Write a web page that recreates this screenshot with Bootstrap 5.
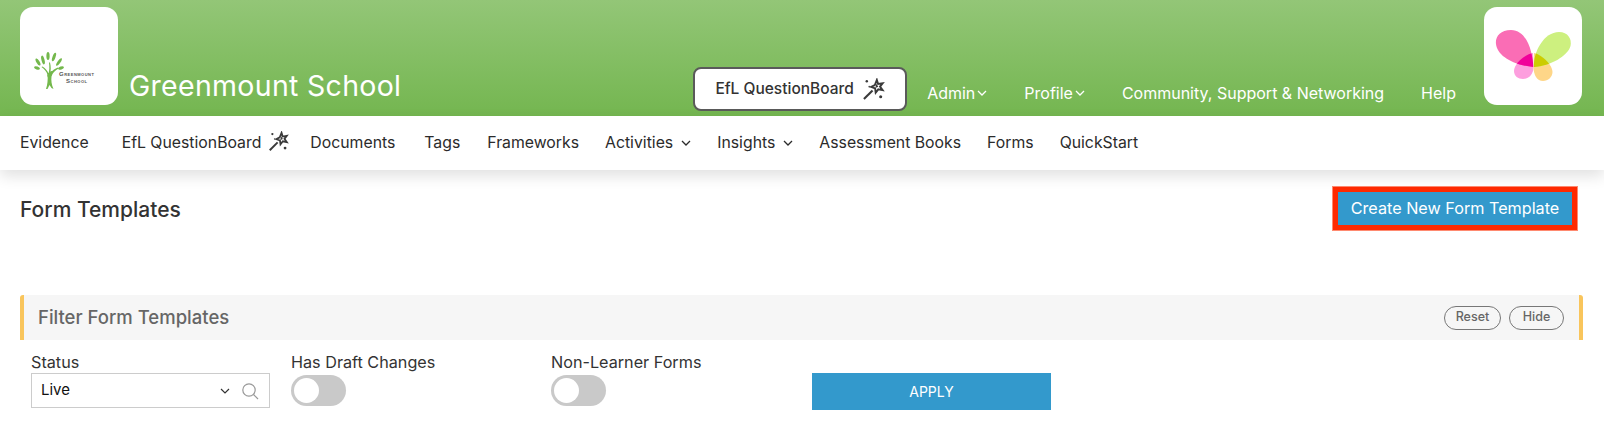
<!DOCTYPE html>
<html lang="en">
<head>
    <meta charset="UTF-8">
    <meta name="viewport" content="width=device-width, initial-scale=1.0">
    <title>Form Templates</title>
    <link href="https://cdn.jsdelivr.net/npm/bootstrap@5.3.0/dist/css/bootstrap.min.css" rel="stylesheet">
    <style>
        body { font-family: Inter, "Liberation Sans", sans-serif; color: #2b2b2b; background: #fff; }
        .top-band { height: 116px; background: linear-gradient(#93c677, #74b650); padding: 7px 22px 0 20px; }
        .logo-tile { width: 98px; height: 98px; background: #fff; border-radius: 13px; flex: none; }
        .school-tile { padding: 0 0 16px 14px; }
        .school-name { font-size: 28.5px; line-height: 1; color: #fff; margin: 0 0 16px 11px; letter-spacing: .3px; }
        .qb-pill { width: 214px; height: 44px; margin: 0 0 5px; background: #fff; border: 2px solid #5a5a5a; border-radius: 8px; font-size: 15.5px; font-weight: 500; color: #333; }
        .top-link { color: #fff; font-size: 16px; line-height: 20px; text-decoration: none; margin: 0 0 13px 37px; }
        .top-link.first-link { margin-left: 20px; }
        .top-link.last-link { margin-right: 28px; }
        .caret-gap { gap: 2px; }
        .main-nav { height: 54px; padding-left: 20px; box-shadow: 0 6px 14px rgba(0,0,0,.12); position: relative; }
        .main-link { color: #2b2b2b; font-size: 15.8px; text-decoration: none; margin-right: 26px; }
        .main-link.wide-after { margin-right: 33px; }
        .main-link.wand-link { margin-right: 21px; }
        .main-link.docs-link { margin-right: 29px; }
        .main-link.tags-link { margin-right: 27px; }
        .wand-small { margin: 0 0 4px 7px; }
        .title-row { padding: 16px 26px 0 20px; }
        .page-name { font-size: 21px; font-weight: 500; color: #333; margin: 3px 0 0; }
        .create-btn { background: #3399cc; color: #fff; font-size: 16.2px; border: 6px solid #ff2a00; border-radius: 0; padding: 0; width: 246px; height: 45px; outline: 1px solid #ff8a70; outline-offset: -1px; }
        .filter-bar { margin: 64px 21px 0 20px; height: 45px; background: #f6f6f6; border-left: 4px solid #f9c55c; border-right: 4px solid #f9c55c; border-radius: 3px 3px 0 0; padding: 0 15px 0 14px; }
        .filter-name { font-size: 18.5px; font-weight: 500; color: #666; margin: 0; }
        .pill-btn { width: 57px; font-size: 12.5px; font-weight: 500; color: #666; border: 1px solid #777; border-radius: 12px; background: transparent; height: 24px; padding: 0; }
        .pill-btn.pill-hide { width: 55px; }
        .filter-fields { padding: 12px 0 0 31px; }
        .field-col { width: 260px; }
        .field-label { font-size: 16.2px; color: #333; line-height: 20px; margin: 0; }
        .status-box { width: 239px; height: 35px; border: 1px solid #ccc; padding: 0 10px 0 9px; margin-top: 1px; font-size: 15px; color: #111; }
        .select-caret { margin-right: 11px; }
        .toggle-track { width: 55px; height: 31px; background: #c9c9c9; border-radius: 16px; margin-top: 3px; padding: 3px; }
        .toggle-knob { width: 25px; height: 25px; background: #fff; border-radius: 50%; }
        .apply-btn { background: #3399cc; color: #fff; font-size: 14px; width: 239px; height: 37px; border: 0; border-radius: 0; padding: 0; margin: 21px 0 0 1px; }
        .mini-school { font-family: "Liberation Sans", sans-serif; font-size: 6px; font-weight: 700; line-height: 7px; color: #555; font-variant: small-caps; text-align: center; letter-spacing: .5px; margin: 0 0 4px -5px; }
    </style>
</head>
<body>
    <svg width="0" height="0" class="d-block">
        <symbol id="wand" viewBox="0 0 24 24">
            <path d="M2 22L11 13" stroke="#3a3a3a" stroke-width="2.2" fill="none"/>
            <path d="M15.5 2l1.3 4.300 4.700-.8-2.700 3.500 2.700 3.700-4.500-.9-2.700 3.400-.6-4.300-4.200-1.600 3.900-2z" fill="none" stroke="#3a3a3a" stroke-width="2"/>
            <path d="M15 6l2 3-3 1.500z" fill="#3a3a3a"/>
            <circle cx="5" cy="3.5" r="1.3" fill="#3a3a3a"/>
            <circle cx="7.5" cy="9" r=".8" fill="#3a3a3a"/>
            <circle cx="19.5" cy="19.5" r="1.6" fill="#3a3a3a"/>
        </symbol>
        <clipPath id="pink-upper-clip"><path d="M49.3 60C49 48 44 23 27 23 16 23 11 30 12 37 13 48 28 58 49.3 60z"/></clipPath>
        <clipPath id="green-upper-clip"><path d="M50 60C49 45 60 25 75 25 84 25 88 32 86.5 39 84 49 66 59 50 60z"/></clipPath>
    </svg>

    <div class="top-band d-flex align-items-start">
        <div class="logo-tile school-tile d-flex align-items-end">
            <svg width="30" height="37" viewBox="0 0 30 37" class="flex-shrink-0">
                <g fill="#74b84c">
                    <path d="M12 37c1.500-5 2-9 1.500-14-.5-3-3-6-6-8l1-.5c3 2 5 4 6 7 1-3 1-7 .5-11l1 0c1 4 1 8 0 11 2-3 5-5 8-6l.5 1c-3 2-6 4-7 8-.5 4 0 8 2 12.500l-2-1-2-3-2 4z"/>
                    <ellipse cx="4" cy="10" rx="1.600" ry="4" transform="rotate(-30 4 10)"/>
                    <ellipse cx="9" cy="8" rx="1.500" ry="4.500" transform="rotate(-15 9 8)"/>
                    <ellipse cx="14" cy="4" rx="1.600" ry="4"/>
                    <ellipse cx="20" cy="5" rx="1.500" ry="4.500" transform="rotate(20 20 5)"/>
                    <ellipse cx="25" cy="10" rx="1.500" ry="4.500" transform="rotate(35 25 10)"/>
                    <ellipse cx="27" cy="16" rx="1.500" ry="3" transform="rotate(70 27 16)"/>
                    <ellipse cx="3" cy="16" rx="3" ry="1.500" transform="rotate(20 3 16)"/>
                    <ellipse cx="16" cy="22" rx="1.600" ry="3.500" transform="rotate(40 16 22)"/>
                </g>
            </svg>
            <div class="mini-school">Greenmount<br>School</div>
        </div>
        <div class="school-name align-self-end">Greenmount School</div>

        <div class="ms-auto d-flex align-items-end align-self-stretch">
            <button class="qb-pill d-flex align-items-center justify-content-center gap-2" type="button">
                EfL QuestionBoard
                <svg width="23" height="23"><use href="#wand"/></svg>
            </button>
            <a class="top-link first-link d-flex align-items-center caret-gap" href="#">Admin
                <svg width="10" height="6" viewBox="0 0 10 6"><path d="M1 1l4 4 4-4" stroke="#fff" stroke-width="1.300" fill="none"/></svg>
            </a>
            <a class="top-link d-flex align-items-center caret-gap" href="#">Profile
                <svg width="10" height="6" viewBox="0 0 10 6"><path d="M1 1l4 4 4-4" stroke="#fff" stroke-width="1.300" fill="none"/></svg>
            </a>
            <a class="top-link" href="#">Community, Support &amp; Networking</a>
            <a class="top-link last-link" href="#">Help</a>
            <div class="logo-tile align-self-start">
                <svg width="98" height="98" viewBox="0 0 98 98" class="d-block">
                    <path fill="#fd9ede" d="M49 46C42 47 30 56 30 64 30 69 34 72 39 72 45 72 49.5 67 49.5 60z"/>
                    <path fill="#fed688" d="M50 46C56 47 68 56 68.5 65 68.5 70 64 74 59 74 53 74 49.5 68 49.5 60z"/>
                    <path fill="#fa6db5" d="M49.3 60C49 48 44 23 27 23 16 23 11 30 12 37 13 48 28 58 49.3 60z"/>
                    <path fill="#cdf07f" d="M50 60C49 45 60 25 75 25 84 25 88 32 86.5 39 84 49 66 59 50 60z"/>
                    <path fill="#f0009a" clip-path="url(#pink-upper-clip)" d="M49 46C42 47 30 56 30 64 30 69 34 72 39 72 45 72 49.5 67 49.5 60z"/>
                    <path fill="#cccc00" clip-path="url(#green-upper-clip)" d="M50 46C56 47 68 56 68.5 65 68.5 70 64 74 59 74 53 74 49.5 68 49.5 60z"/>
                </svg>
            </div>
        </div>
    </div>

    <nav class="main-nav d-flex align-items-center bg-white">
        <a class="main-link wide-after" href="#">Evidence</a>
        <a class="main-link wand-link d-flex align-items-center" href="#">EfL QuestionBoard
            <svg width="21" height="21" class="wand-small"><use href="#wand"/></svg>
        </a>
        <a class="main-link docs-link" href="#">Documents</a>
        <a class="main-link tags-link" href="#">Tags</a>
        <a class="main-link" href="#">Frameworks</a>
        <a class="main-link d-flex align-items-center gap-2" href="#">Activities
            <svg width="10" height="6" viewBox="0 0 10 6"><path d="M1 1l4 4 4-4" stroke="#2b2b2b" stroke-width="1.300" fill="none"/></svg>
        </a>
        <a class="main-link d-flex align-items-center gap-2" href="#">Insights
            <svg width="10" height="6" viewBox="0 0 10 6"><path d="M1 1l4 4 4-4" stroke="#2b2b2b" stroke-width="1.300" fill="none"/></svg>
        </a>
        <a class="main-link" href="#">Assessment Books</a>
        <a class="main-link" href="#">Forms</a>
        <a class="main-link" href="#">QuickStart</a>
    </nav>

    <div class="title-row d-flex justify-content-between align-items-center">
        <h1 class="page-name">Form Templates</h1>
        <button class="btn create-btn" type="button">Create New Form Template</button>
    </div>

    <div class="filter-bar d-flex justify-content-between align-items-center">
        <h2 class="filter-name">Filter Form Templates</h2>
        <div class="d-flex gap-2">
            <button class="pill-btn" type="button">Reset</button>
            <button class="pill-btn pill-hide" type="button">Hide</button>
        </div>
    </div>

    <div class="filter-fields d-flex">
        <div class="field-col">
            <p class="field-label">Status</p>
            <div class="status-box d-flex align-items-center">
                <span class="me-auto">Live</span>
                <svg width="10" height="6" viewBox="0 0 10 6" class="select-caret"><path d="M1 1l4 4 4-4" stroke="#333" stroke-width="1.200" fill="none"/></svg>
                <svg width="18" height="18" viewBox="0 0 18 18"><circle cx="8" cy="8" r="6.200" stroke="#999" stroke-width="1.200" fill="none"/><path d="M12.500 12.500L17 17" stroke="#999" stroke-width="1.200"/></svg>
            </div>
        </div>
        <div class="field-col">
            <p class="field-label">Has Draft Changes</p>
            <div class="toggle-track"><div class="toggle-knob"></div></div>
        </div>
        <div class="field-col">
            <p class="field-label">Non-Learner Forms</p>
            <div class="toggle-track"><div class="toggle-knob"></div></div>
        </div>
        <button class="btn apply-btn" type="button">APPLY</button>
    </div>

    <script src="https://cdn.jsdelivr.net/npm/bootstrap@5.3.0/dist/js/bootstrap.bundle.min.js"></script>
</body>
</html>
